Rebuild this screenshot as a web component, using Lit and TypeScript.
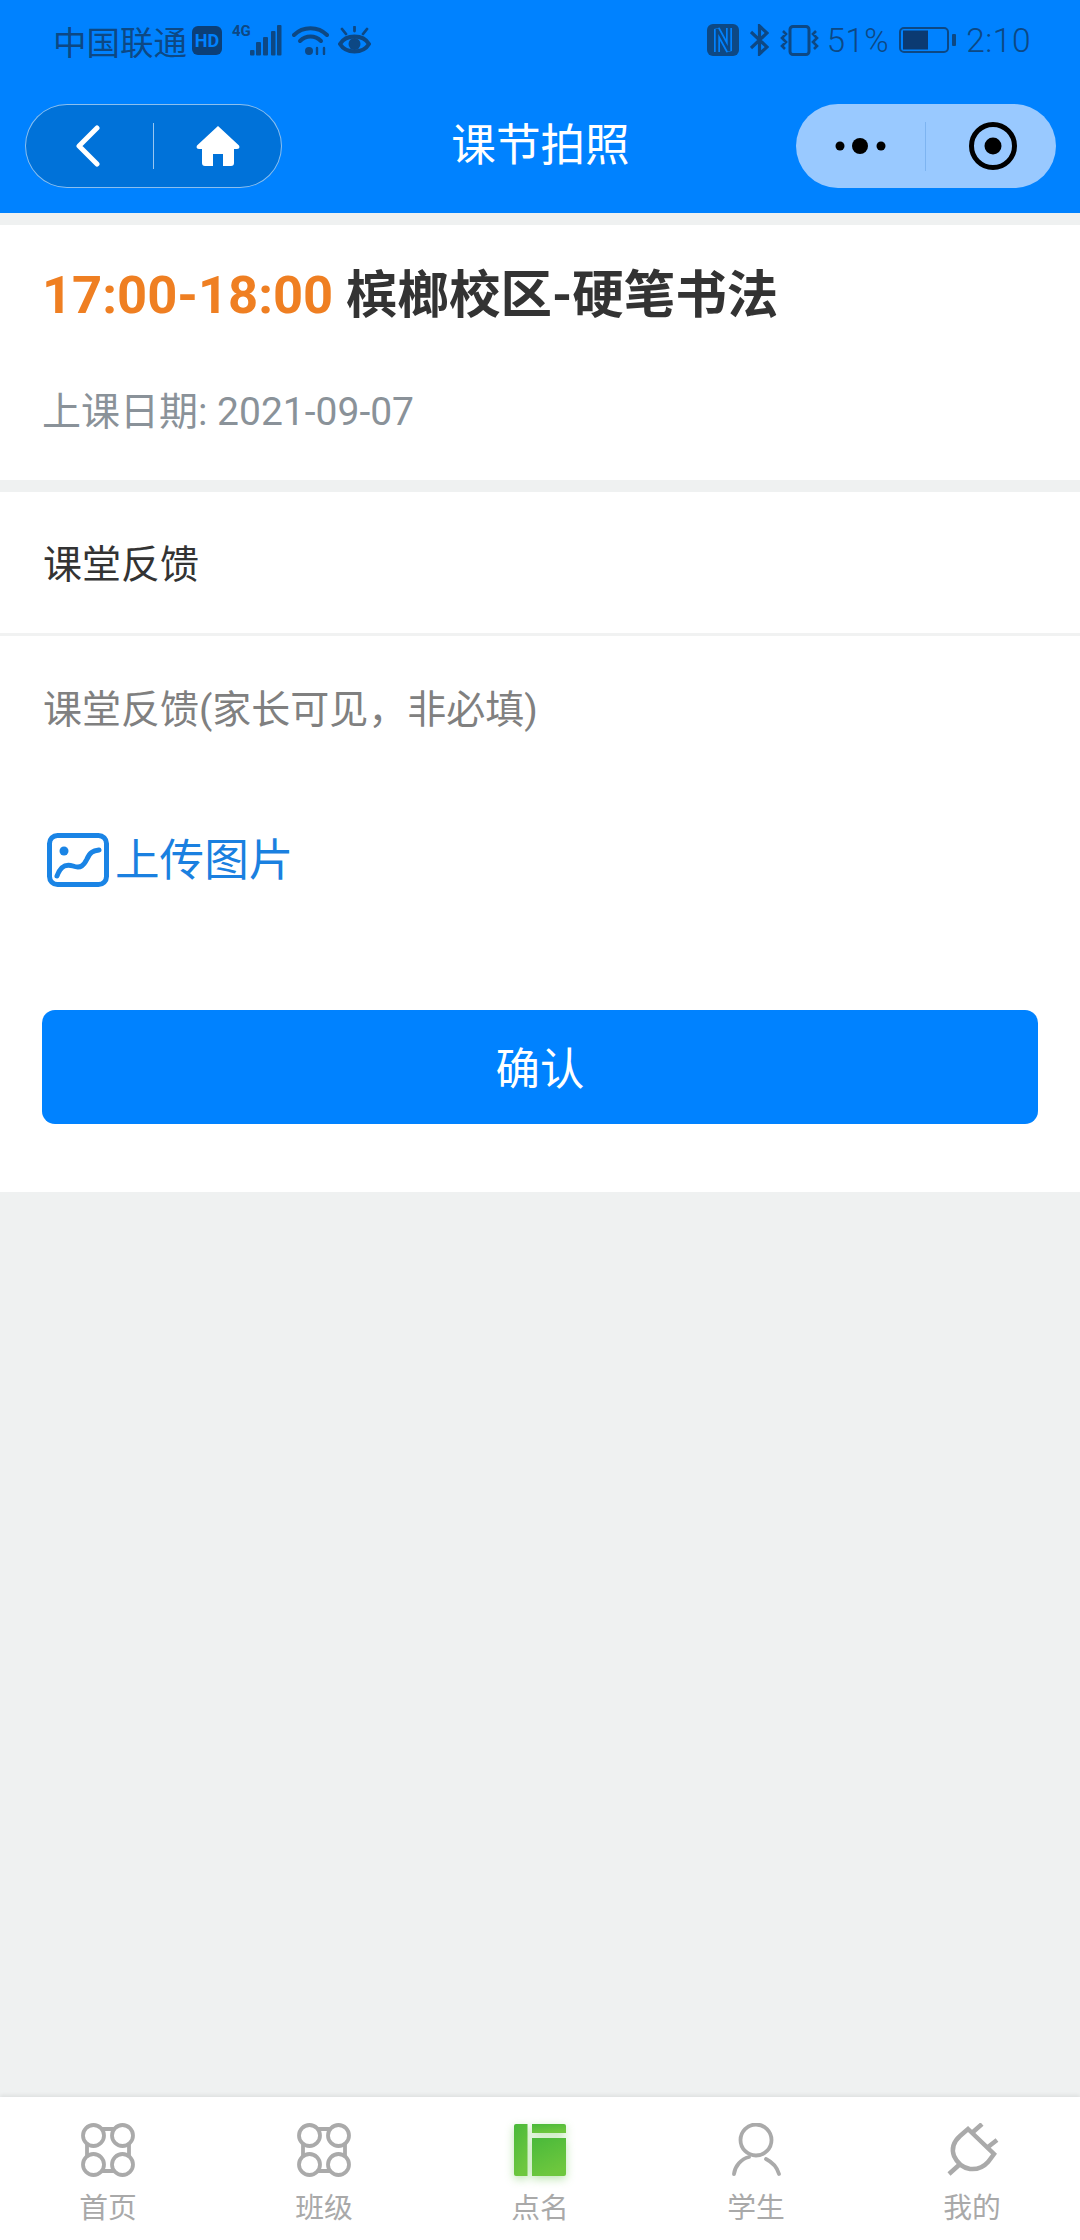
import { LitElement, html, css } from 'lit';
import { customElement } from 'lit/decorators.js';

const tabs = [
  { label: '首页', icon: 'nodes' },
  { label: '班级', icon: 'nodes' },
  { label: '点名', icon: 'layout' },
  { label: '学生', icon: 'person' },
  { label: '我的', icon: 'plug' }
];

const nodesIcon = html`
  <svg class="tab-icon" viewBox="0 0 54 54" fill="none" stroke="#aaa" stroke-width="3.800">
    <circle cx="12.500" cy="12.500" r="10.500"></circle>
    <circle cx="41.500" cy="12.500" r="10.500"></circle>
    <circle cx="12.500" cy="41.500" r="10.500"></circle>
    <circle cx="41.500" cy="41.500" r="10.500"></circle>
    <path d="M20 6h14M20 48h14M6 20v14M48 20v14"></path>
  </svg>
`;

const layoutIcon = html`
  <svg class="tab-icon layout" viewBox="0 0 52 52">
    <defs>
      <linearGradient id="lg" x1="0" y1="0" x2="0.4" y2="1">
        <stop offset="0" stop-color="#49b93a"></stop>
        <stop offset="1" stop-color="#6ec73e"></stop>
      </linearGradient>
    </defs>
    <path fill="url(#lg)" d="M2 0h11.500v52H2a2 2 0 0 1-2-2V2a2 2 0 0 1 2-2z"></path>
    <path fill="url(#lg)" d="M18 0h32a2 2 0 0 1 2 2v7H18z"></path>
    <path fill="url(#lg)" d="M18 14h34v36a2 2 0 0 1-2 2H18z"></path>
  </svg>
`;

const personIcon = html`
  <svg class="tab-icon" viewBox="0 0 54 54" fill="none" stroke="#aaa" stroke-width="3.800" stroke-linecap="round">
    <circle cx="27" cy="17" r="15.500"></circle>
    <path d="M5 51C6 43 12 36 20 34M37 36C43 39 48 44 50 51"></path>
  </svg>
`;

const plugIcon = html`
  <svg class="tab-icon" viewBox="0 0 54 54" fill="none" stroke="#aaa" stroke-width="4.500">
    <path d="M23 6L49 31L43 39Q36 47 25 46Q14 44 9 33Q5 22 15 13Z"></path>
    <path d="M28 9L37 1M43 24L52 17M4 51L14 42"></path>
  </svg>
`;

const tabIcons: Record<string, unknown> = {
  nodes: nodesIcon,
  layout: layoutIcon,
  person: personIcon,
  plug: plugIcon
};

@customElement('app-root')
export class AppRoot extends LitElement {
  static styles = css`
    :host {
      display: flex;
      flex-direction: column;
      min-height: 2240px;
      background: #eff1f1;
      font-family: Roboto, "Noto Sans CJK SC", sans-serif;
    }

    .header {
      height: 213px;
      background: #0082ff;
      flex: none;
    }

    .status {
      height: 73px;
      padding: 23px 49px 0 53px;
      box-sizing: border-box;
      display: flex;
      justify-content: space-between;
      color: #0d4884;
    }

    .status-left,
    .status-right {
      display: flex;
      align-items: center;
      height: 34px;
    }

    .carrier {
      font-size: 33.500px;
      color: #0d4884;
      margin-right: 5px;
    }

    .hd {
      width: 30px;
      height: 29px;
      border-radius: 6px;
      background: #0b3f78;
      color: #0082ff;
      font-size: 18px;
      font-weight: 700;
      line-height: 29px;
      text-align: center;
      margin-right: 10px;
    }

    .signal {
      position: relative;
      width: 50px;
      height: 31px;
      margin-right: 10px;
    }

    .net {
      position: absolute;
      left: 0;
      top: -1px;
      font-size: 15px;
      line-height: 14px;
      font-weight: 700;
      color: #0d4884;
    }

    .wifi {
      margin-right: 9px;
    }

    .pct {
      font-size: 33px;
      font-weight: 300;
      margin: 0 10px 0 8px;
      letter-spacing: 0.5px;
    }

    .clock {
      font-size: 33.500px;
      font-weight: 300;
      margin-left: 10px;
      letter-spacing: 0.5px;
    }

    .gap-11 {
      margin-right: 11px;
    }

    .nav {
      display: grid;
      grid-template-columns: 1fr auto 1fr;
      align-items: center;
      padding: 0 24px 0 25px;
      height: 84px;
      margin-top: 31px;
    }

    .capsule {
      box-sizing: border-box;
      height: 84px;
      border-radius: 42px;
      display: flex;
      align-items: center;
    }

    .capsule.back {
      width: 257px;
      background: #0072d9;
      border: 1px solid rgba(255, 255, 255, 0.55);
      justify-self: start;
    }

    .capsule.menu {
      width: 260px;
      background: #99c9ff;
      justify-self: end;
    }

    .cell {
      flex: 1;
      display: flex;
      align-items: center;
      justify-content: center;
    }

    .back .cell:first-child {
      flex: none;
      width: 127px;
      padding-right: 4px;
      box-sizing: border-box;
    }

    .menu .cell:first-child {
      flex: none;
      width: 129px;
    }

    .menu .cell:last-child {
      padding-left: 3px;
    }

    .sep {
      width: 1px;
      flex: none;
    }

    .back .sep {
      height: 46px;
      background: rgba(255, 255, 255, 0.6);
    }

    .menu .sep {
      height: 49px;
      background: rgba(0, 90, 180, 0.18);
    }

    .title {
      font-size: 44.600px;
      color: #fff;
      line-height: 60px;
    }

    .info {
      background: #fff;
      margin-top: 12px;
      padding: 35px 42px 43px;
    }

    .course {
      font-size: 51.500px;
      font-weight: 700;
      line-height: 70px;
      color: #333;
    }

    .time {
      color: #ef7f22;
      font-size: 52.500px;
    }

    .date {
      margin-top: 56px;
      font-size: 39px;
      line-height: 50px;
      color: #8a9299;
    }

    .feedback {
      background: #fff;
      margin-top: 12px;
      flex: none;
    }

    .feedback-head {
      height: 144px;
      box-sizing: border-box;
      padding: 48px 43px 0;
      font-size: 39px;
      line-height: 50px;
      color: #333;
      border-bottom: 3px solid #f1f2f2;
    }

    .form {
      padding: 49px 42px 68px;
    }

    .placeholder {
      font-size: 39px;
      line-height: 50px;
      color: #808080;
      padding-left: 1px;
    }

    .upload {
      display: flex;
      align-items: center;
      margin-top: 98px;
      padding-left: 5px;
      gap: 6px;
      height: 54px;
      font-size: 44.600px;
      color: #1a80e0;
    }

    .upload span {
      margin-bottom: 7px;
    }

    .confirm {
      margin-top: 123px;
      height: 114px;
      box-sizing: border-box;
      padding-bottom: 4px;
      border-radius: 13px;
      background: #0082ff;
      color: #fff;
      font-size: 44.400px;
      display: flex;
      align-items: center;
      justify-content: center;
    }

    .spacer {
      flex: 1;
    }

    .tabbar {
      height: 143px;
      background: #fff;
      display: grid;
      grid-template-columns: repeat(5, 1fr);
      box-shadow: 0 -2px 4px rgba(0, 0, 0, 0.07);
      flex: none;
    }

    .tab {
      display: flex;
      flex-direction: column;
      align-items: center;
      padding-top: 26px;
      font-size: 28.800px;
      color: #a9a9a9;
    }

    .tab-icon {
      width: 54px;
      height: 54px;
      display: block;
    }

    .tab-icon.layout {
      width: 52px;
      height: 52px;
      margin: 1px;
      filter: drop-shadow(0 3px 5px rgba(90, 190, 60, 0.4));
    }

    .tab span {
      margin-top: 11px;
      line-height: 40px;
    }
  `;

  _statusLeft() {
    return html`
      <div class="status-left">
        <span class="carrier">中国联通</span>
        <div class="hd">HD</div>
        <div class="signal">
          <span class="net">4G</span>
          <svg width="50" height="31" viewBox="0 0 50 31" fill="#0d4884">
            <rect x="18" y="25" width="4.500" height="5.500" rx="1"></rect>
            <rect x="24" y="17" width="5" height="13.500" rx="1"></rect>
            <rect x="31" y="12" width="5" height="18.500" rx="1"></rect>
            <rect x="39" y="6" width="4.500" height="24.500" rx="1"></rect>
            <rect x="45" y="0" width="4.500" height="30.500" rx="1"></rect>
          </svg>
        </div>
        <svg class="wifi" width="37" height="29" viewBox="0 0 37 29" fill="none" stroke="#0d4884" stroke-width="4" stroke-linecap="round">
          <path d="M2 9C11 0 26 0 35 9"></path>
          <path d="M8 15C14 9 23 9 29 15"></path>
          <circle cx="17" cy="25" r="4" fill="#0d4884" stroke="none"></circle>
          <path d="M25 22v6M32 22v6" stroke-width="2.400"></path>
        </svg>
        <svg width="33" height="29" viewBox="0 0 33 29" fill="none" stroke="#0d4884" stroke-width="4" stroke-linecap="round">
          <path d="M2 18C8 8 25 8 31 18C25 28 8 28 2 18Z"></path>
          <circle cx="16.500" cy="18" r="6" fill="#0d4884" stroke="none"></circle>
          <path d="M4 3L8 8M16.500 1V5M29 3L25 8" stroke-width="2.800"></path>
        </svg>
      </div>
    `;
  }

  _statusRight() {
    return html`
      <div class="status-right">
        <svg class="gap-11" width="32" height="32" viewBox="0 0 32 32" fill="none">
          <rect width="32" height="32" rx="6" fill="#0d4884"></rect>
          <path d="M10 28V5L22 27V4" stroke="#0082ff" stroke-width="6"></path>
          <path d="M10 28V5L22 27V4" stroke="#0d4884" stroke-width="2.600"></path>
        </svg>
        <svg class="gap-11" width="19" height="32" viewBox="0 0 19 32" fill="none" stroke="#0d4884" stroke-width="3.200">
          <path d="M1 8L17 23L9.500 30V2L17 9L1 24"></path>
        </svg>
        <svg width="39" height="31" viewBox="0 0 39 31" fill="none" stroke="#0d4884" stroke-width="3">
          <rect x="10" y="1.500" width="19" height="28" rx="3"></rect>
          <path d="M3 6L6 9L2 13L6 17L2 21L5 24M36 6L33 9L37 13L33 17L37 21L34 24" stroke-width="2.600"></path>
        </svg>
        <span class="pct">51%</span>
        <svg width="57" height="26" viewBox="0 0 57 26">
          <rect x="1" y="1" width="48" height="24" rx="4" fill="none" stroke="#0d4884" stroke-width="2"></rect>
          <rect x="4" y="3.500" width="25" height="19" fill="#0b3a72"></rect>
          <rect x="53" y="7" width="4" height="12" rx="1" fill="#0d4884"></rect>
        </svg>
        <span class="clock">2:10</span>
      </div>
    `;
  }

  _capsules() {
    return {
      back: html`
        <div class="capsule back">
          <div class="cell">
            <svg width="24" height="42" viewBox="0 0 24 42" fill="none" stroke="#fff" stroke-width="5" stroke-linecap="round" stroke-linejoin="round">
              <path d="M21 3L3 21L21 39"></path>
            </svg>
          </div>
          <div class="sep"></div>
          <div class="cell">
            <svg width="44" height="40" viewBox="0 0 44 40" fill="#fff">
              <path d="M22 0L43 19.500Q44.500 23 41 23H38V37Q38 40 35 40H27V28H17V40H9Q6 40 6 37V23H3Q-0.500 23 1 19.500Z"></path>
            </svg>
          </div>
        </div>
      `,
      menu: html`
        <div class="capsule menu">
          <div class="cell">
            <svg width="52" height="18" viewBox="0 0 52 18" fill="#000">
              <circle cx="5" cy="9" r="4.500"></circle>
              <circle cx="25" cy="9" r="8"></circle>
              <circle cx="46" cy="9" r="4.500"></circle>
            </svg>
          </div>
          <div class="sep"></div>
          <div class="cell">
            <svg width="48" height="48" viewBox="0 0 48 48">
              <circle cx="24" cy="24" r="21.500" fill="none" stroke="#000" stroke-width="5"></circle>
              <circle cx="24" cy="24" r="8.500" fill="#000"></circle>
            </svg>
          </div>
        </div>
      `
    };
  }

  render() {
    const capsules = this._capsules();
    return html`
      <div class="header">
        <div class="status">
          ${this._statusLeft()}
          ${this._statusRight()}
        </div>
        <div class="nav">
          ${capsules.back}
          <div class="title">课节拍照</div>
          ${capsules.menu}
        </div>
      </div>

      <div class="info">
        <div class="course"><span class="time">17:00-18:00</span> 槟榔校区-硬笔书法</div>
        <div class="date">上课日期: 2021-09-07</div>
      </div>

      <div class="feedback">
        <div class="feedback-head">课堂反馈</div>
        <div class="form">
          <div class="placeholder">课堂反馈(家长可见，非必填)</div>
          <div class="upload">
            <svg width="62" height="54" viewBox="0 0 62 54" fill="none" stroke="#1a84e5" stroke-width="5" stroke-linecap="round">
              <rect x="2.500" y="2.500" width="57" height="49" rx="8"></rect>
              <circle cx="17" cy="18" r="4.500" fill="#1a84e5" stroke="none"></circle>
              <path d="M10 43C14 32 20 31 26 33C34 36 37 32 40 26C43 19 46 18 52 17"></path>
            </svg>
            <span>上传图片</span>
          </div>
          <div class="confirm">确认</div>
        </div>
      </div>

      <div class="spacer"></div>

      <div class="tabbar">
        ${tabs.map(tab => html`
          <div class="tab">
            ${tabIcons[tab.icon]}
            <span>${tab.label}</span>
          </div>
        `)}
      </div>
    `;
  }
}
